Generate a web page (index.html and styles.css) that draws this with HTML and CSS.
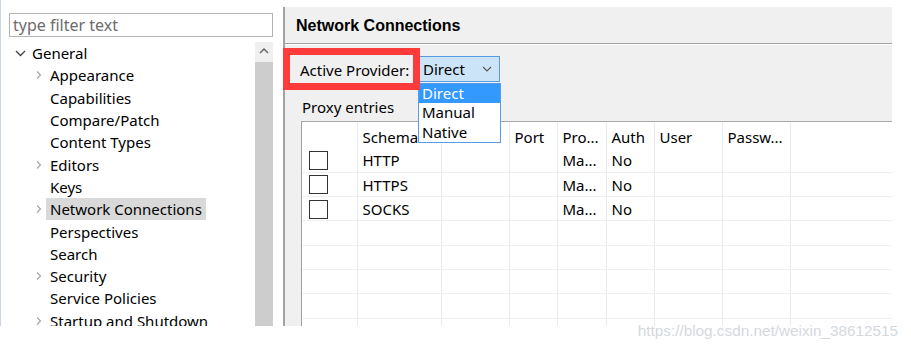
FILE: index.html
```html
<!DOCTYPE html>
<html lang="en">
<head>
  <meta charset="UTF-8">
  <title>Preferences - Network Connections</title>
  <link rel="stylesheet" href="styles.css">
</head>
<body>
  <div class="window">
    <aside class="nav">
      <div class="filter">type filter text</div>
      <div class="tree-wrap">
        <ul class="tree">
          <li class="node root">
            <svg class="twisty" width="14" height="22" viewBox="0 0 14 22"><path d="M2 9 L6.5 13.5 L11 9" fill="none" stroke="#404040" stroke-width="1.3"/></svg>
            <span class="label">General</span>
          </li>
          <li class="node">
            <svg class="twisty" width="14" height="22" viewBox="0 0 14 22"><path d="M5 7.5 L8.5 11 L5 14.5" fill="none" stroke="#a6a6a6" stroke-width="1.2"/></svg>
            <span class="label">Appearance</span>
          </li>
          <li class="node"><span class="twisty"></span><span class="label">Capabilities</span></li>
          <li class="node"><span class="twisty"></span><span class="label">Compare/Patch</span></li>
          <li class="node"><span class="twisty"></span><span class="label">Content Types</span></li>
          <li class="node">
            <svg class="twisty" width="14" height="22" viewBox="0 0 14 22"><path d="M5 7.5 L8.5 11 L5 14.5" fill="none" stroke="#a6a6a6" stroke-width="1.2"/></svg>
            <span class="label">Editors</span>
          </li>
          <li class="node"><span class="twisty"></span><span class="label">Keys</span></li>
          <li class="node">
            <svg class="twisty" width="14" height="22" viewBox="0 0 14 22"><path d="M5 7.5 L8.5 11 L5 14.5" fill="none" stroke="#a6a6a6" stroke-width="1.2"/></svg>
            <span class="label selected">Network Connections</span>
          </li>
          <li class="node"><span class="twisty"></span><span class="label">Perspectives</span></li>
          <li class="node"><span class="twisty"></span><span class="label">Search</span></li>
          <li class="node">
            <svg class="twisty" width="14" height="22" viewBox="0 0 14 22"><path d="M5 7.5 L8.5 11 L5 14.5" fill="none" stroke="#a6a6a6" stroke-width="1.2"/></svg>
            <span class="label">Security</span>
          </li>
          <li class="node"><span class="twisty"></span><span class="label">Service Policies</span></li>
          <li class="node">
            <svg class="twisty" width="14" height="22" viewBox="0 0 14 22"><path d="M5 7.5 L8.5 11 L5 14.5" fill="none" stroke="#a6a6a6" stroke-width="1.2"/></svg>
            <span class="label">Startup and Shutdown</span>
          </li>
        </ul>
        <div class="scrollbar">
          <div class="sb-up">
            <svg width="18" height="20" viewBox="0 0 18 20"><path d="M5 11 L9 7 L13 11" fill="none" stroke="#606060" stroke-width="1.4"/></svg>
          </div>
          <div class="sb-thumb"></div>
        </div>
      </div>
    </aside>

    <main class="page">
      <div class="page-title">Network Connections</div>
      <div class="page-body">
        <div class="provider-row">
          <span class="provider-label">Active Provider:</span>
          <div class="combo">
            <span>Direct</span>
            <svg width="10" height="6" viewBox="0 0 10 6"><path d="M1 1 L5 5 L9 1" fill="none" stroke="#555" stroke-width="1.1"/></svg>
          </div>
        </div>

        <ul class="combo-list">
          <li class="active">Direct</li>
          <li>Manual</li>
          <li>Native</li>
        </ul>

        <div class="section-label">Proxy entries</div>

        <div class="table-wrap">
          <table class="grid">
            <colgroup>
              <col style="width:55px"><col style="width:84px"><col style="width:68px"><col style="width:48px">
              <col style="width:49px"><col style="width:48px"><col style="width:68px"><col style="width:68px"><col style="width:120px">
            </colgroup>
            <thead>
              <tr><th></th><th>Schema</th><th></th><th>Port</th><th>Pro...</th><th>Auth</th><th>User</th><th>Passw...</th><th></th></tr>
            </thead>
            <tbody>
              <tr><td><span class="check"></span></td><td>HTTP</td><td></td><td></td><td>Ma...</td><td>No</td><td></td><td></td><td></td></tr>
              <tr><td><span class="check"></span></td><td>HTTPS</td><td></td><td></td><td>Ma...</td><td>No</td><td></td><td></td><td></td></tr>
              <tr><td><span class="check"></span></td><td>SOCKS</td><td></td><td></td><td>Ma...</td><td>No</td><td></td><td></td><td></td></tr>
              <tr><td></td><td></td><td></td><td></td><td></td><td></td><td></td><td></td><td></td></tr>
              <tr><td></td><td></td><td></td><td></td><td></td><td></td><td></td><td></td><td></td></tr>
              <tr><td></td><td></td><td></td><td></td><td></td><td></td><td></td><td></td><td></td></tr>
              <tr><td></td><td></td><td></td><td></td><td></td><td></td><td></td><td></td><td></td></tr>
              <tr><td></td><td></td><td></td><td></td><td></td><td></td><td></td><td></td><td></td></tr>
            </tbody>
          </table>
        </div>
      </div>
    </main>
  </div>

  <!-- annotation box drawn over the screenshot -->
  <div class="mark-box"></div>
  <div class="watermark">https://blog.csdn.net/weixin_38612515</div>
</body>
</html>
```

FILE: styles.css
```css
/* Eclipse preferences dialog, Windows look */
body {
  margin: 0;
  padding: 0;
  background-color: #fff;
  font-family: 'Noto Sans', sans-serif;
  font-size: 15px;
  color: #000;
  position: relative;
  width: 911px;
  height: 350px;
  overflow: hidden;
}

.window {
  display: flex;
  height: 326px;
  overflow: hidden;
}

/* left navigation */
.nav {
  width: 264px;
  flex: none;
  border-left: 1px solid #c9d5e2;
  padding: 13px 10px 0 8px;
}

.filter {
  height: 22px;
  line-height: 22px;
  border: 1px solid #b4b4b4;
  padding-left: 3px;
  color: #6d6d6d;
  font-size: 16px;
}

.tree-wrap {
  display: flex;
  margin-top: 5px;
  height: 284px;
}

.tree {
  list-style: none;
  margin: 0;
  padding: 0;
  flex: 1;
}

.node {
  display: flex;
  align-items: center;
  height: 22.3px;
  padding-left: 23px;
}

.node.root {
  padding-left: 5px;
}

.twisty {
  width: 14px;
  height: 22px;
  flex: none;
}

.label {
  padding: 0 4px;
  line-height: 22px;
  white-space: nowrap;
}

.label.selected {
  background-color: #d9d9d9;
}

.scrollbar {
  width: 18px;
  flex: none;
  display: flex;
  flex-direction: column;
}

.sb-up {
  height: 20px;
  background-color: #f0f0f0;
}

.sb-thumb {
  flex: 1;
  background-color: #cdcdcd;
}

/* right page */
.page {
  width: 607px;
  flex: none;
  margin-top: 7px;
  height: 319px;
  background-color: #f0f0f0;
  border-left: 2px solid #a3a3a3;
  overflow: hidden;
}

.page-title {
  height: 36px;
  line-height: 38px;
  padding-left: 11px;
  font-family: 'Liberation Sans', sans-serif;
  font-weight: 700;
  font-size: 16px;
  border-bottom: 1px solid #a0a0a0;
  box-shadow: 0 1px 0 #fff;
}

.page-body {
  position: relative;
  padding: 12px 0 0 15px;
}

.provider-row {
  display: flex;
  align-items: center;
  height: 26px;
}

.provider-label {
  width: 119px;
  padding-top: 1px;
}

.combo {
  border: 1px solid #569de5;
  background-color: #cce4f7;
  display: flex;
  align-items: center;
  justify-content: space-between;
  padding: 0 7px 0 3px;
  box-sizing: border-box;
  width: 81px;
  height: 26px;
}

.combo-list {
  position: absolute;
  left: 133px;
  top: 39px;
  width: 81px;
  margin: 0;
  padding: 0;
  list-style: none;
  background-color: #fff;
  border: 1px solid #569de5;
}

.combo-list li {
  height: 19.3px;
  line-height: 19px;
  padding-left: 3px;
}

.combo-list li.active {
  background-color: #3399ff;
  color: #fff;
}

.section-label {
  margin-top: 15px;
  padding-left: 2px;
  height: 20px;
  line-height: 20px;
}

.table-wrap {
  margin-top: 4px;
  margin-left: 1px;
  background-color: #fff;
  border-top: 1px solid #a8a8a8;
  border-left: 1px solid #a0a0a0;
  height: 220px;
  overflow: hidden;
}

.grid {
  border-collapse: collapse;
  table-layout: fixed;
  width: 608px;
}

.grid th {
  height: 26px;
  padding: 4px 0 0 5px;
  font-weight: 400;
  text-align: left;
  border-right: 1px solid #e6ebf2;
  white-space: nowrap;
  box-sizing: border-box;
}

.grid td {
  height: 24.3px;
  padding: 1px 0 0 5px;
  border-right: 1px solid #e6ebf2;
  border-bottom: 1px solid #f0f0f0;
  white-space: nowrap;
  box-sizing: border-box;
}

.check {
  display: block;
  width: 17px;
  height: 17px;
  border: 1px solid #333;
  margin-left: 2px;
}

/* overlays */
.mark-box {
  position: absolute;
  left: 283px;
  top: 48px;
  width: 123px;
  height: 28px;
  border: 7px solid #fd3b3b;
}

.watermark {
  position: absolute;
  right: 13px;
  top: 322px;
  font-family: 'Liberation Sans', sans-serif;
  font-size: 15.3px;
  color: #d4d8de;
}
```
